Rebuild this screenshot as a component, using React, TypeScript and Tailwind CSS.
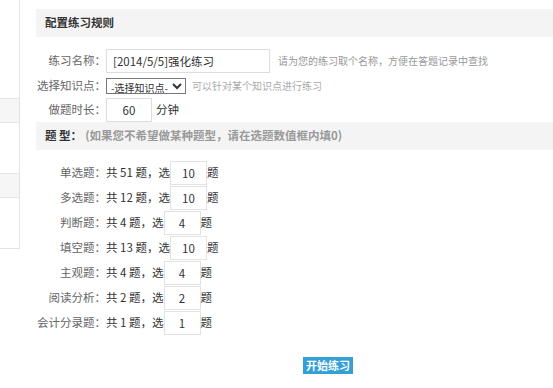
import React from "react";

const FONT = { fontFamily: '"Noto Sans CJK SC", "Liberation Sans", sans-serif' };

const TYPES = [
  { label: "单选题：", total: 51, pick: 10 },
  { label: "多选题：", total: 12, pick: 10 },
  { label: "判断题：", total: 4, pick: 4 },
  { label: "填空题：", total: 13, pick: 10 },
  { label: "主观题：", total: 4, pick: 4 },
  { label: "阅读分析：", total: 2, pick: 2 },
  { label: "会计分录题：", total: 1, pick: 1 },
];

/** Left nav stub, mostly cut off at the window edge. */
function SideNav() {
  return (
    <div className="flex h-[249px] w-[20px] shrink-0 flex-col border-r border-b border-[#e3e3e3]">
      <div className="h-[98px] shrink-0" />
      <div className="h-[25px] shrink-0 border-y border-[#e6e6e6] bg-[#f6f6f6]" />
      <div className="h-[50px] shrink-0" />
      <div className="h-[25px] shrink-0 border-y border-[#e6e6e6] bg-[#f6f6f6]" />
    </div>
  );
}

// Labels hang off to the left when wider than the column, like the original page.
function Label({ children }: { children: React.ReactNode }) {
  return (
    <span className="flex w-[70px] shrink-0 justify-end whitespace-nowrap text-[#666]">{children}</span>
  );
}

export default function App() {
  return (
    <div className="flex h-[388px] w-[553px] overflow-hidden bg-white text-[11.5px] leading-none" style={FONT}>
      <SideNav />
      <div className="ml-[16px] min-w-0 flex-1 pt-[9px]">
        <div className="flex h-[28px] items-center bg-[#f4f4f4] pl-[9px] font-bold text-[#333]">配置练习规则</div>

        <div className="mt-[12px] flex h-[24px] items-center">
          <Label>练习名称：</Label>
          <input
            readOnly
            value="[2014/5/5]强化练习"
            className="h-[24px] w-[164px] border border-[#ddd] px-[6px] text-[11.5px] text-[#333] outline-none"
          />
          <span className="ml-[8px] text-[10px] text-[#999]">请为您的练习取个名称，方便在答题记录中查找</span>
        </div>

        <div className="mt-[5px] flex h-[16px] items-center">
          <Label>选择知识点：</Label>
          <select className="h-[16px] w-[80px] border border-[#777] px-0 text-[10px] leading-none text-[#333]">
            <option>-选择知识点-</option>
          </select>
          <span className="ml-[6px] text-[10px] text-[#aaa]">可以针对某个知识点进行练习</span>
        </div>

        <div className="mt-[4px] flex h-[24px] items-center">
          <Label>做题时长：</Label>
          <input
            readOnly
            value="60"
            className="h-[24px] w-[46px] border border-[#ddd] text-center text-[11.5px] text-[#333] outline-none"
          />
          <span className="ml-[4px] text-[#333]">分钟</span>
        </div>

        <div className="flex h-[28px] items-center bg-[#f4f4f4] pl-[9px] font-bold">
          <span className="text-[#333]">题 型：</span>
          <span className="ml-[3px] text-[#999]">(如果您不希望做某种题型，请在选题数值框内填0)</span>
        </div>

        <div className="mt-[10px]">
          {TYPES.map((t) => (
            <div key={t.label} className="flex h-[25px] items-center">
              <Label>{t.label}</Label>
              <span className="whitespace-nowrap text-[#333]">共 {t.total} 题，选</span>
              <input
                readOnly
                value={t.pick}
                className="h-[24px] w-[37px] border border-[#e2e2e2] text-center text-[11.5px] text-[#333] outline-none"
              />
              <span className="text-[#333]">题</span>
            </div>
          ))}
        </div>

        <div className="mt-[22px] flex pl-[267px]">
          <button className="h-[17px] w-[50px] bg-[#33a0d6] text-[11px] font-bold leading-none text-white">
            开始练习
          </button>
        </div>
      </div>
    </div>
  );
}
